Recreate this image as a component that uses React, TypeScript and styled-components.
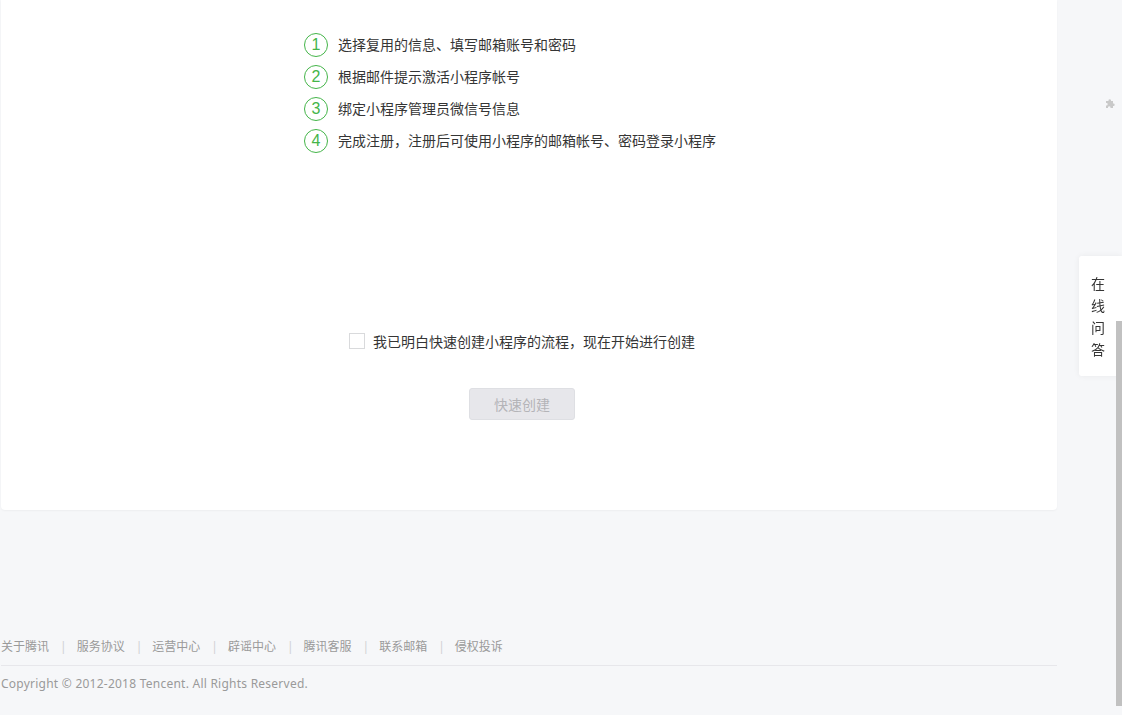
import * as React from 'react';
import styled, { createGlobalStyle } from 'styled-components';

const GlobalStyle = createGlobalStyle`
    html, body {
        margin: 0;
        padding: 0;
        background: #f6f7f9;
        font-family: "Noto Sans", "Noto Sans CJK SC", sans-serif;
        color: #353535;
        overflow: hidden;
    }
`;

const Page = styled.div`
    width: 1056px;
    margin-left: 1px;
    height: 715px;
`;

const Card = styled.section`
    background: #fff;
    border-radius: 0 0 4px 4px;
    box-shadow: 0 1px 2px rgba(0, 0, 0, 0.04);
    padding: 33px 14px 90px 0;
    display: flex;
    flex-direction: column;
`;

const Steps = styled.ol`
    list-style: none;
    margin: 0;
    padding: 0 0 0 303px;
    display: flex;
    flex-direction: column;
    gap: 8px;
`;

const Step = styled.li`
    display: flex;
    align-items: center;
    height: 24px;
    font-size: 14px;
    color: #353535;
`;

const Num = styled.span`
    box-sizing: border-box;
    width: 24px;
    height: 24px;
    border: 1px solid #44b549;
    border-radius: 50%;
    color: #44b549;
    font-size: 16px;
    display: flex;
    align-items: center;
    justify-content: center;
    margin-right: 10px;
    font-family: "Liberation Sans", "Noto Sans", sans-serif;
`;

const StepText = styled.span`
    margin-top: -2px;
`;

const Agree = styled.label`
    align-self: center;
    display: flex;
    align-items: center;
    height: 22px;
    margin-top: 177px;
    font-size: 14px;
    color: #353535;
`;

const Box = styled.span`
    box-sizing: border-box;
    width: 16px;
    height: 16px;
    border: 1px solid #d9dadc;
    background: #fff;
    margin-right: 8px;
`;

const CreateButton = styled.button`
    align-self: center;
    margin-top: 36px;
    width: 106px;
    height: 32px;
    box-sizing: border-box;
    background: #e7e7eb;
    border: 1px solid #dedfe3;
    border-radius: 3px;
    color: #b4b4b8;
    font-size: 14px;
    font-family: "Noto Sans CJK SC", sans-serif;
    cursor: not-allowed;
`;

const Footer = styled.footer`
    margin-top: 126px;
    font-size: 12px;
    color: #9a9a9a;
`;

const Links = styled.nav`
    display: flex;
    align-items: center;
    height: 20px;
    padding-bottom: 9px;
    border-bottom: 1px solid #e7e7eb;
`;

const FooterLink = styled.a`
    color: #9a9a9a;
    text-decoration: none;
`;

const Sep = styled.span`
    color: #d0d1d4;
    margin: 0 10px 0 11px;
`;

const Copy = styled.p`
    margin: 0;
    line-height: 20px;
    padding-top: 8px;
    letter-spacing: 0.24px;
`;

const Help = styled.aside`
    position: fixed;
    right: 0;
    top: 256px;
    width: 43px;
    height: 120px;
    box-sizing: border-box;
    padding: 16px 0 0 12px;
    background: #fff;
    border-radius: 3px 0 0 3px;
    box-shadow: 0 0 6px rgba(0, 0, 0, 0.06);
    font-size: 14px;
    line-height: 22px;
    color: #353535;
    font-family: "Noto Sans CJK SC", sans-serif;
`;

const Plugin = styled.svg`
    position: fixed;
    right: 6px;
    top: 98px;
`;

const ScrollThumb = styled.div`
    position: fixed;
    right: 0;
    top: 321px;
    width: 6px;
    height: 385px;
    background: #c1c1c1;
`;

const steps = [
    '选择复用的信息、填写邮箱账号和密码',
    '根据邮件提示激活小程序帐号',
    '绑定小程序管理员微信号信息',
    '完成注册，注册后可使用小程序的邮箱帐号、密码登录小程序',
];

const links = ['关于腾讯', '服务协议', '运营中心', '辟谣中心', '腾讯客服', '联系邮箱', '侵权投诉'];

const App = () => {
    return (
        <>
            <GlobalStyle />
            <Page>
                <Card>
                    <Steps>
                        {steps.map((s, i) => (
                            <Step key={i}>
                                <Num>{i + 1}</Num>
                                <StepText>{s}</StepText>
                            </Step>
                        ))}
                    </Steps>
                    <Agree>
                        <Box />
                        我已明白快速创建小程序的流程，现在开始进行创建
                    </Agree>
                    <CreateButton disabled>快速创建</CreateButton>
                </Card>
                <Footer>
                    <Links>
                        {links.map((l, i) => (
                            <React.Fragment key={l}>
                                {i > 0 && <Sep>|</Sep>}
                                <FooterLink href="#">{l}</FooterLink>
                            </React.Fragment>
                        ))}
                    </Links>
                    <Copy>Copyright © 2012-2018 Tencent. All Rights Reserved.</Copy>
                </Footer>
            </Page>
            <Plugin width="11" height="11" viewBox="0 0 11 11">
                <path d="M1 3h2.5a1.3 1.3 0 1 1 2.5 0H8v2.5a1.3 1.3 0 1 1 0 2.5V10H5.5a1.3 1.3 0 1 0-2.5 0H1V7.5a1.3 1.3 0 1 0 0-2.5z" fill="#c9c9c9" />
            </Plugin>
            <Help>在<br />线<br />问<br />答</Help>
            <ScrollThumb />
        </>
    );
};

export default App;
